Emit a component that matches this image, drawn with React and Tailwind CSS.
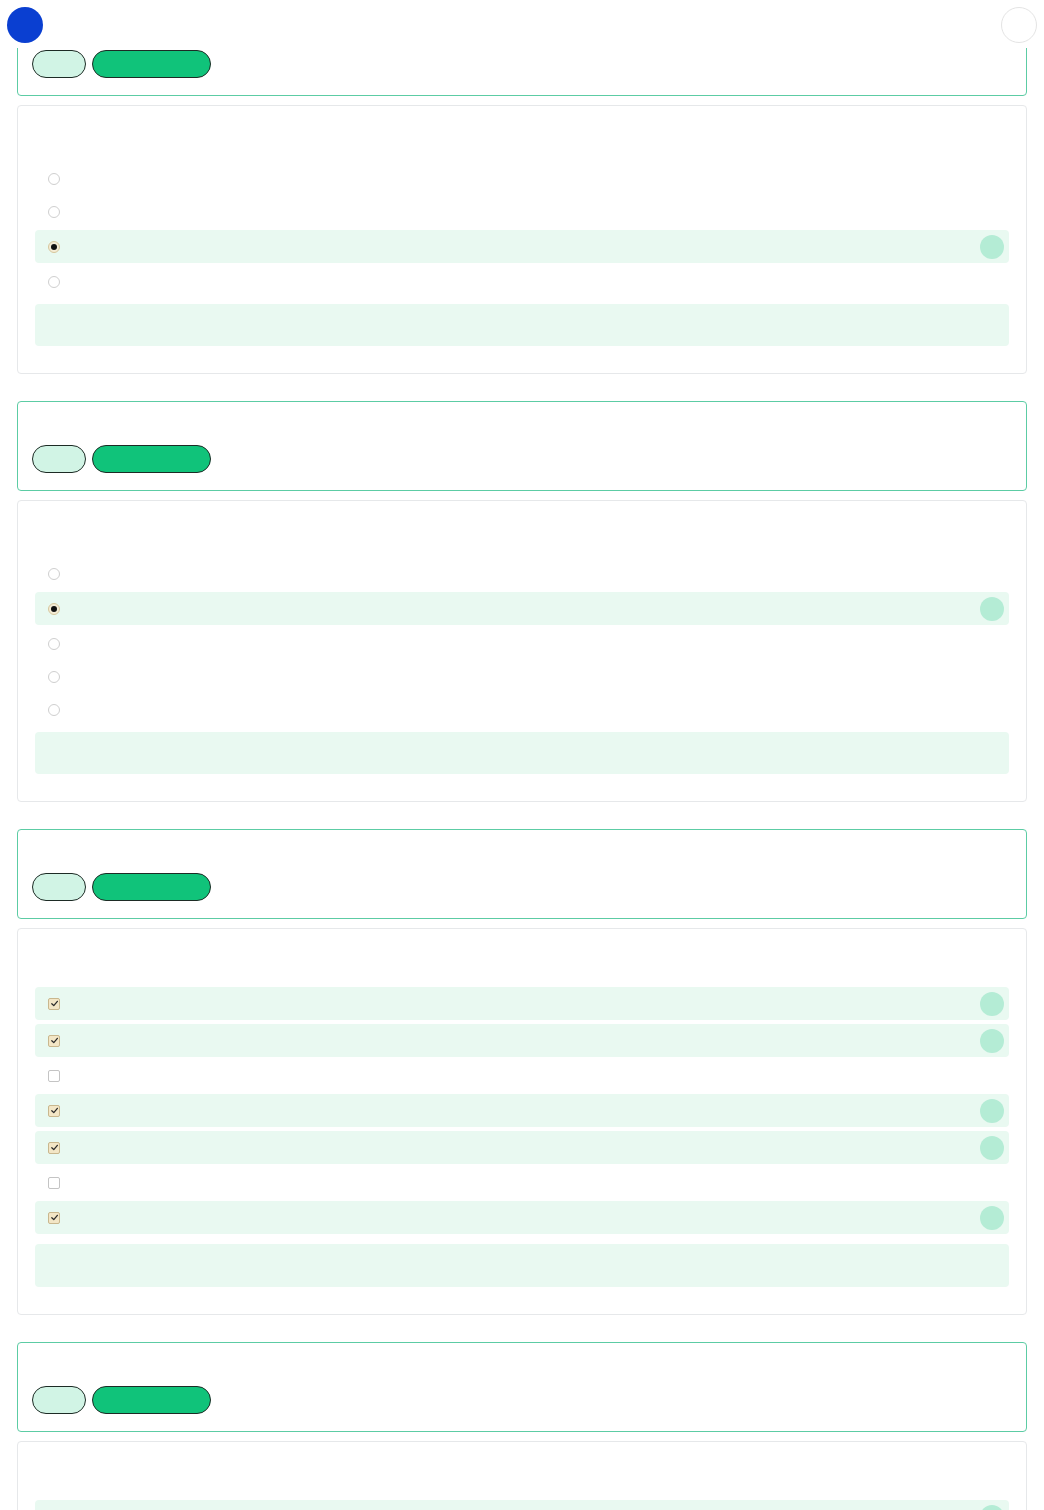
const groups = [
  { type: "radio", options: [false, false, true, false] },
  { type: "radio", options: [false, true, false, false, false] },
  { type: "check", options: [true, true, false, true, true, false, true] },
  { type: "check", options: [true, false, true, false] },
]

const Radio = ({ on }) =>
  on ? (
    <span className="flex h-[12px] w-[12px] items-center justify-center rounded-full border border-[#d6c69c] bg-[#f4ecd6]">
      <span className="h-[6px] w-[6px] rounded-full bg-[#111111]" />
    </span>
  ) : (
    <span className="h-[12px] w-[12px] rounded-full border border-[#cfcfcf] bg-white" />
  )

const Check = ({ on }) =>
  on ? (
    <span className="flex h-[12px] w-[12px] items-center justify-center rounded-[2px] border border-[#c9b78e] bg-[#f3e6c6]">
      <svg width="9" height="9" viewBox="0 0 10 10" fill="none">
        <path d="M2 5.2 L4.2 7.4 L8.2 2.6" stroke="#2a2a2a" strokeWidth="1.4" strokeLinecap="round" strokeLinejoin="round" />
      </svg>
    </span>
  ) : (
    <span className="h-[12px] w-[12px] rounded-[2px] border border-[#c4c4c4] bg-white" />
  )

const Option = ({ type, on }) => (
  <div
    className={`flex items-center justify-between rounded-[4px] pl-[13px] pr-[5px] ${
      on ? "h-[33px] bg-[#e9f9f1]" : "h-[29px]"
    }`}
  >
    {type === "radio" ? <Radio on={on} /> : <Check on={on} />}
    {on && <span className="h-[24px] w-[24px] rounded-full bg-[#b4ecd5]" />}
  </div>
)

const Group = ({ type, options }) => (
  <div className="flex flex-col gap-[9px]">
    <div className="flex h-[90px] flex-col justify-end rounded-[4px] border border-[#5ccca4] bg-white pb-[17px] pl-[14px]">
      <div className="flex gap-[6px]">
        <span className="h-[28px] w-[54px] rounded-full border border-[#1d2b25] bg-[#d1f4e5]" />
        <span className="h-[28px] w-[119px] rounded-full border border-[#1d2b25] bg-[#10c37a]" />
      </div>
    </div>
    <div className="rounded-[4px] border border-[#e6e8ea] bg-white px-[17px] pt-[58px] pb-[27px]">
      <div className="flex flex-col gap-[4px]">
        {options.map((on, i) => (
          <Option key={i} type={type} on={on} />
        ))}
      </div>
      <div
        className={`rounded-[4px] bg-[#e9f9f1] ${
          type === "radio" ? "mt-[8px] h-[42px]" : "mt-[10px] h-[43px]"
        }`}
      />
    </div>
  </div>
)

export default function App() {
  return (
    <div className="min-h-screen bg-white font-['Liberation_Sans',sans-serif]">
      <div className="fixed inset-x-0 top-0 z-10 flex h-[48px] items-start justify-between bg-white px-[7px] pt-[7px]">
        <span className="h-[36px] w-[36px] rounded-full bg-[#0a3fd1]" />
        <span className="h-[36px] w-[36px] rounded-full border border-[#e4e4e4] bg-white" />
      </div>
      <div className="flex flex-col gap-[27px] px-[17px] pt-[6px]">
        {groups.map((g, i) => (
          <Group key={i} {...g} />
        ))}
      </div>
    </div>
  )
}
